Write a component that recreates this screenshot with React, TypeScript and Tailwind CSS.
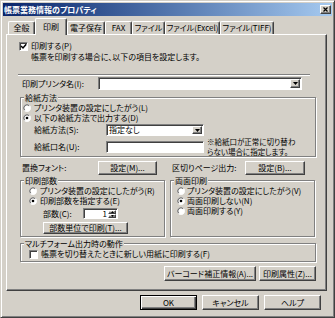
import React from "react";

const raised =
  "bg-[#d4d0c8] border border-t-white border-l-white border-r-[#404040] border-b-[#404040] shadow-[inset_-1px_-1px_0_#808080]";
const sunken =
  "bg-white border border-t-[#808080] border-l-[#808080] border-r-white border-b-white shadow-[inset_1px_1px_0_#404040]";
const groupBox =
  "border border-[#808080] shadow-[inset_1px_1px_0_#fff,1px_1px_0_#fff] p-0 m-0 min-w-0";
const legendCls = "ml-[3px] px-[1px] h-[9px] leading-[9px] bg-[#d4d0c8]";

function Radio({ checked }: { checked?: boolean }) {
  return (
    <svg width="8" height="8" viewBox="0 0 12 12" className="shrink-0">
      <circle cx="6" cy="6" r="5.5" fill="#fff" />
      <path d="M2.1 9.9 A5.5 5.5 0 0 1 9.9 2.1" fill="none" stroke="#808080" strokeWidth="1" />
      <path d="M9.9 2.1 A5.5 5.5 0 0 1 2.1 9.9" fill="none" stroke="#fff" strokeWidth="1" />
      <path d="M2.8 9.2 A4.5 4.5 0 0 1 9.2 2.8" fill="none" stroke="#404040" strokeWidth="1" />
      {checked && <circle cx="6" cy="6" r="2" fill="#000" />}
    </svg>
  );
}

function Check({ checked }: { checked?: boolean }) {
  return (
    <div className={`w-[9px] h-[9px] shrink-0 flex items-center justify-center ${sunken}`}>
      {checked && (
        <svg width="7" height="7" viewBox="0 0 7 7">
          <path d="M1 3 L3 5 L6.2 1.2" fill="none" stroke="#000" strokeWidth="1.5" />
        </svg>
      )}
    </div>
  );
}

function DropBtn() {
  return (
    <div className={`w-[10px] h-full shrink-0 flex items-center justify-center ${raised}`}>
      <svg width="5" height="3" viewBox="0 0 5 3">
        <path d="M0 0 H5 L2.5 3 Z" fill="#000" />
      </svg>
    </div>
  );
}

function Btn({ className, children }: { className: string; children: React.ReactNode }) {
  return (
    <div className={`flex items-center justify-center whitespace-nowrap ${raised} ${className}`}>
      {children}
    </div>
  );
}

const tabs = [
  { label: "全般", w: "w-[27px]" },
  { label: "印刷", w: "w-[32px]", sel: true },
  { label: "電子保存", w: "w-[38px]" },
  { label: "FAX", w: "w-[27px]" },
  { label: "ファイル", w: "w-[33px]" },
  { label: "ファイル(Excel)", w: "w-[55px]" },
  { label: "ファイル(TIFF)", w: "w-[54px]" },
];

export default function App() {
  return (
    <div className="w-[335px] h-[318px] bg-[#d4d0c8] text-black text-[8px] leading-[10px] font-['Noto_Sans_CJK_JP',sans-serif] [font-feature-settings:'palt'] overflow-hidden">
      <div className="w-[335px] h-[318px] flex flex-col p-[2px] border border-t-[#d4d0c8] border-l-[#d4d0c8] border-r-[#404040] border-b-[#404040] shadow-[inset_1px_1px_0_#fff,inset_-1px_-1px_0_#808080]">
        {/* Title bar */}
        <div className="h-[13px] shrink-0 flex items-center justify-between bg-linear-to-r from-[#0a246a] to-[#a6caf0] pl-[1px] pr-[1px]">
          <span className="text-white font-bold text-[8px] leading-[10px]">帳票業務情報のプロパティ</span>
          <div className={`w-[11px] h-[9px] flex items-center justify-center ${raised}`}>
            <svg width="5" height="5" viewBox="0 0 5 5">
              <path d="M0.5 0.5 L4.5 4.5 M4.5 0.5 L0.5 4.5" stroke="#000" strokeWidth="1.2" />
            </svg>
          </div>
        </div>

        {/* Tabs */}
        <div className="mt-[2px] h-[16px] shrink-0 flex items-end pl-[5px]">
          {tabs.map((t) =>
            t.sel ? (
              <div
                key={t.label}
                className={`${t.w} h-[17px] mb-[-1px] relative z-10 bg-[#d4d0c8] flex items-center justify-center whitespace-nowrap border-t border-l border-r border-t-white border-l-white border-r-[#404040] shadow-[inset_-1px_0_0_#808080] rounded-t-[2px]`}
              >
                {t.label}
              </div>
            ) : (
              <div
                key={t.label}
                className={`${t.w} h-[13px] flex items-center justify-center whitespace-nowrap border-t border-l border-r border-t-white border-l-white border-r-[#404040] shadow-[inset_-1px_0_0_#808080] rounded-t-[2px]`}
              >
                {t.label}
              </div>
            )
          )}
        </div>

        {/* Panel */}
        <div className="ml-[3px] w-[321px] h-[257px] shrink-0 flex flex-col border border-t-white border-l-white border-r-[#404040] border-b-[#404040] shadow-[inset_-1px_-1px_0_#808080]">
          <div className="mt-[6px] ml-[12px] h-[10px] flex items-center gap-[3px]">
            <Check checked />
            <span>印刷する(P)</span>
          </div>
          <div className="mt-[1px] ml-[24px] h-[10px]">帳票を印刷する場合に、以下の項目を設定します。</div>
          <div className="mt-[12px] ml-[11px] w-[292px] h-[2px] border-t border-t-[#808080] border-b border-b-white" />

          <div className="mt-[1px] ml-[15px] h-[13px] flex items-center">
            <span className="w-[76px]">印刷プリンタ名(I):</span>
            <div className={`w-[204px] h-full flex justify-end p-[1px] ${sunken}`}>
              <DropBtn />
            </div>
          </div>

          {/* 給紙方法 */}
          <fieldset className={`mt-[3px] ml-[13px] w-[296px] pb-[3px] ${groupBox}`}>
            <legend className={legendCls}>給紙方法</legend>
            <div className="mt-[1px] ml-[2px] h-[10px] flex items-center gap-[3px]">
              <Radio />
              <span>プリンタ装置の設定にしたがう(L)</span>
            </div>
            <div className="ml-[2px] h-[10px] flex items-center gap-[3px]">
              <Radio checked />
              <span>以下の給紙方法で出力する(D)</span>
            </div>
            <div className="mt-[1px] ml-[13px] h-[12px] flex items-center">
              <span className="w-[72px]">給紙方法(S):</span>
              <div className={`w-[98px] h-full flex items-center justify-between p-[1px] ${sunken}`}>
                <span className="pl-[1px]">指定なし</span>
                <DropBtn />
              </div>
            </div>
            <div className="mt-[5px] ml-[13px] h-[12px] flex items-center">
              <span className="w-[72px]">給紙口名(U):</span>
              <div className={`w-[98px] h-full ${sunken}`} />
              <div className="ml-[3px] text-[7.5px] leading-[10px]">
                <div>※給紙口が正常に切り替わ</div>
                <div>らない場合に指定します。</div>
              </div>
            </div>
          </fieldset>

          <div className="mt-[4px] ml-[15px] h-[14px] flex items-center">
            <span className="w-[76px]">置換フォント:</span>
            <Btn className="w-[59px] h-full">設定(M)...</Btn>
            <span className="ml-[15px] w-[73px]">区切りページ出力:</span>
            <Btn className="w-[60px] h-full">設定(B)...</Btn>
          </div>

          <div className="mt-[1px] ml-[13px] flex">
            <fieldset className={`w-[145px] pb-[2px] ${groupBox}`}>
              <legend className={legendCls}>印刷部数</legend>
              <div className="mt-[1px] ml-[8px] h-[10px] flex items-center gap-[3px]">
                <Radio />
                <span>プリンタ装置の設定にしたがう(R)</span>
              </div>
              <div className="ml-[8px] h-[10px] flex items-center gap-[3px]">
                <Radio checked />
                <span>印刷部数を指定する(E)</span>
              </div>
              <div className="mt-[2px] ml-[22px] h-[11px] flex items-center">
                <span className="w-[40px]">部数(C):</span>
                <div className={`w-[35px] h-full flex items-center justify-end p-[1px] ${sunken}`}>
                  <span className="pr-[1px]">1</span>
                  <div className="w-[8px] h-full flex flex-col">
                    <div className={`flex-1 flex items-center justify-center ${raised}`}>
                      <svg width="3" height="2" viewBox="0 0 3 2">
                        <path d="M0 2 H3 L1.5 0 Z" fill="#000" />
                      </svg>
                    </div>
                    <div className={`flex-1 flex items-center justify-center ${raised}`}>
                      <svg width="3" height="2" viewBox="0 0 3 2">
                        <path d="M0 0 H3 L1.5 2 Z" fill="#000" />
                      </svg>
                    </div>
                  </div>
                </div>
              </div>
              <Btn className="mt-[3px] ml-[22px] w-[85px] h-[12px]">部数単位で印刷(T)...</Btn>
            </fieldset>
            <fieldset className={`ml-[5px] w-[145px] pb-[2px] ${groupBox}`}>
              <legend className={legendCls}>両面印刷</legend>
              <div className="mt-[1px] ml-[6px] h-[10px] flex items-center gap-[2px]">
                <Radio />
                <span>プリンタ装置の設定にしたがう(V)</span>
              </div>
              <div className="ml-[6px] h-[10px] flex items-center gap-[2px]">
                <Radio checked />
                <span>両面印刷しない(N)</span>
              </div>
              <div className="ml-[6px] h-[10px] flex items-center gap-[2px]">
                <Radio />
                <span>両面印刷する(Y)</span>
              </div>
            </fieldset>
          </div>

          <fieldset className={`mt-[2px] ml-[13px] w-[296px] pb-[2px] ${groupBox}`}>
            <legend className={legendCls}>マルチフォーム出力時の動作</legend>
            <div className="mt-[1px] ml-[8px] h-[10px] flex items-center gap-[3px]">
              <Check />
              <span>帳票を切り替えたときに新しい用紙に印刷する(F)</span>
            </div>
          </fieldset>

          <div className="mt-[4px] ml-[13px] w-[296px] h-[15px] flex justify-end gap-[3px]">
            <Btn className="w-[92px] h-full">バーコード補正情報(A)...</Btn>
            <Btn className="w-[57px] h-full">印刷属性(Z)...</Btn>
          </div>
        </div>

        {/* Bottom buttons */}
        <div className="mt-[4px] h-[15px] flex pl-[137px] gap-[5px]">
          <div className="w-[57px] h-full flex items-center justify-center border border-black shadow-[inset_1px_1px_0_#fff,inset_-1px_-1px_0_#404040,inset_-2px_-2px_0_#808080]">
            OK
          </div>
          <Btn className="w-[57px] h-full">キャンセル</Btn>
          <Btn className="w-[57px] h-full">ヘルプ</Btn>
        </div>
      </div>
    </div>
  );
}
